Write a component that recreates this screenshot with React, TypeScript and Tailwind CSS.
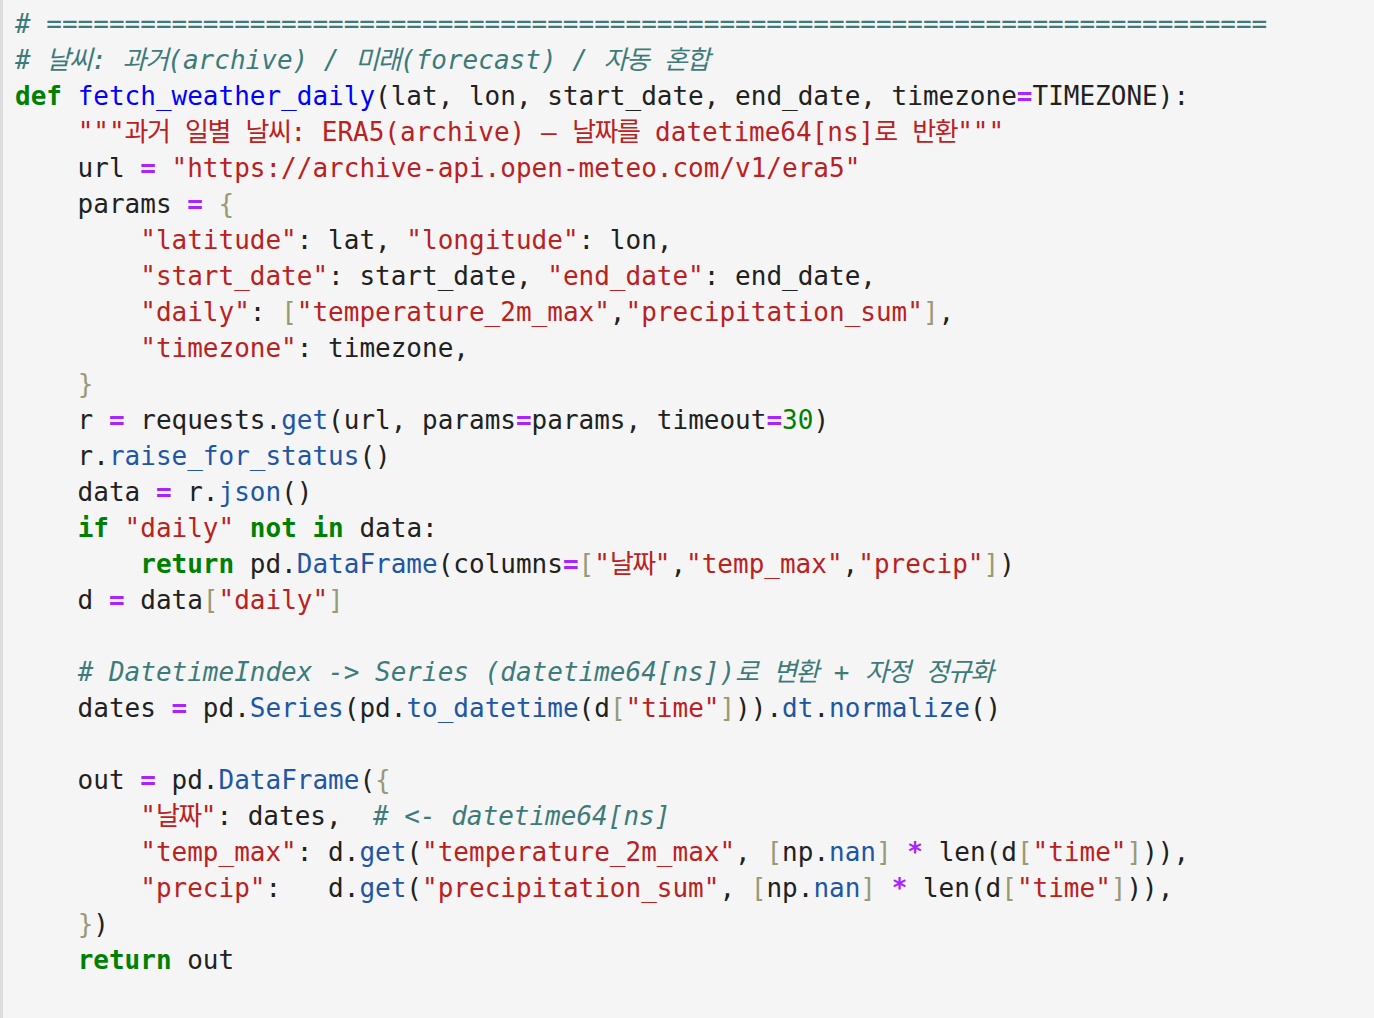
import React from "react";

type Kind = "t" | "c" | "k" | "f" | "s" | "o" | "b" | "p" | "n";
type Tok = [Kind, string];

const kindClass: Record<Kind, string> = {
  t: "text-[#212121]",
  c: "text-[#3d7b7b] italic",
  k: "text-[#008000] font-bold",
  f: "text-[#0000ff]",
  s: "text-[#ba2121]",
  o: "text-[#aa22ff] font-bold",
  b: "text-[#999977]",
  p: "text-[#2156a5]",
  n: "text-[#008000]",
};

const I4 = "    ";
const I8 = "        ";

const lines: Tok[][] = [
  [["c", "# " + "=".repeat(78)]],
  [["c", "# 날씨: 과거(archive) / 미래(forecast) / 자동 혼합"]],
  [
    ["k", "def"],
    ["t", " "],
    ["f", "fetch_weather_daily"],
    ["t", "(lat, lon, start_date, end_date, timezone"],
    ["o", "="],
    ["t", "TIMEZONE):"],
  ],
  [["t", I4], ["s", '"""과거 일별 날씨: ERA5(archive) — 날짜를 datetime64[ns]로 반환"""']],
  [["t", I4 + "url "], ["o", "="], ["t", " "], ["s", '"https://archive-api.open-meteo.com/v1/era5"']],
  [["t", I4 + "params "], ["o", "="], ["t", " "], ["b", "{"]],
  [["t", I8], ["s", '"latitude"'], ["t", ": lat, "], ["s", '"longitude"'], ["t", ": lon,"]],
  [["t", I8], ["s", '"start_date"'], ["t", ": start_date, "], ["s", '"end_date"'], ["t", ": end_date,"]],
  [
    ["t", I8],
    ["s", '"daily"'],
    ["t", ": "],
    ["b", "["],
    ["s", '"temperature_2m_max"'],
    ["t", ","],
    ["s", '"precipitation_sum"'],
    ["b", "]"],
    ["t", ","],
  ],
  [["t", I8], ["s", '"timezone"'], ["t", ": timezone,"]],
  [["t", I4], ["b", "}"]],
  [
    ["t", I4 + "r "],
    ["o", "="],
    ["t", " requests."],
    ["p", "get"],
    ["t", "(url, params"],
    ["o", "="],
    ["t", "params, timeout"],
    ["o", "="],
    ["n", "30"],
    ["t", ")"],
  ],
  [["t", I4 + "r."], ["p", "raise_for_status"], ["t", "()"]],
  [["t", I4 + "data "], ["o", "="], ["t", " r."], ["p", "json"], ["t", "()"]],
  [
    ["t", I4],
    ["k", "if"],
    ["t", " "],
    ["s", '"daily"'],
    ["t", " "],
    ["k", "not"],
    ["t", " "],
    ["k", "in"],
    ["t", " data:"],
  ],
  [
    ["t", I8],
    ["k", "return"],
    ["t", " pd."],
    ["p", "DataFrame"],
    ["t", "(columns"],
    ["o", "="],
    ["b", "["],
    ["s", '"날짜"'],
    ["t", ","],
    ["s", '"temp_max"'],
    ["t", ","],
    ["s", '"precip"'],
    ["b", "]"],
    ["t", ")"],
  ],
  [["t", I4 + "d "], ["o", "="], ["t", " data"], ["b", "["], ["s", '"daily"'], ["b", "]"]],
  [],
  [["t", I4], ["c", "# DatetimeIndex -> Series (datetime64[ns])로 변환 + 자정 정규화"]],
  [
    ["t", I4 + "dates "],
    ["o", "="],
    ["t", " pd."],
    ["p", "Series"],
    ["t", "(pd."],
    ["p", "to_datetime"],
    ["t", "(d"],
    ["b", "["],
    ["s", '"time"'],
    ["b", "]"],
    ["t", "))."],
    ["p", "dt"],
    ["t", "."],
    ["p", "normalize"],
    ["t", "()"],
  ],
  [],
  [["t", I4 + "out "], ["o", "="], ["t", " pd."], ["p", "DataFrame"], ["t", "("], ["b", "{"]],
  [["t", I8], ["s", '"날짜"'], ["t", ": dates,  "], ["c", "# <- datetime64[ns]"]],
  [
    ["t", I8],
    ["s", '"temp_max"'],
    ["t", ": d."],
    ["p", "get"],
    ["t", "("],
    ["s", '"temperature_2m_max"'],
    ["t", ", "],
    ["b", "["],
    ["t", "np."],
    ["p", "nan"],
    ["b", "]"],
    ["t", " "],
    ["o", "*"],
    ["t", " len(d"],
    ["b", "["],
    ["s", '"time"'],
    ["b", "]"],
    ["t", ")),"],
  ],
  [
    ["t", I8],
    ["s", '"precip"'],
    ["t", ":   d."],
    ["p", "get"],
    ["t", "("],
    ["s", '"precipitation_sum"'],
    ["t", ", "],
    ["b", "["],
    ["t", "np."],
    ["p", "nan"],
    ["b", "]"],
    ["t", " "],
    ["o", "*"],
    ["t", " len(d"],
    ["b", "["],
    ["s", '"time"'],
    ["b", "]"],
    ["t", ")),"],
  ],
  [["t", I4], ["b", "}"], ["t", ")"]],
  [["t", I4], ["k", "return"], ["t", " out"]],
];

// hangul runs come from the CJK fallback; keep them from growing the line box
function withHangul(text: string) {
  return text.split(/([\uac00-\ud7a3]+)/).map((part, i) =>
    /[\uac00-\ud7a3]/.test(part) ? (
      <span key={i} className="leading-none tracking-[-1.5px] font-['Noto_Sans_CJK_KR',sans-serif]">
        {part}
      </span>
    ) : (
      part
    )
  );
}

export default function App() {
  return (
    <div className="min-h-screen w-full bg-[#f5f5f5] border-l-[3px] border-[#dddddd] pl-[12px] pt-[6px]">
      <div className="font-['DejaVu_Sans_Mono',monospace] text-[26px] leading-[36px] text-[#212121] whitespace-pre">
        {lines.map((line, i) => (
          <div key={i} className="min-h-[36px]">
            {line.map(([kind, text], j) => (
              <span key={j} className={kindClass[kind]}>
                {withHangul(text)}
              </span>
            ))}
          </div>
        ))}
      </div>
    </div>
  );
}
